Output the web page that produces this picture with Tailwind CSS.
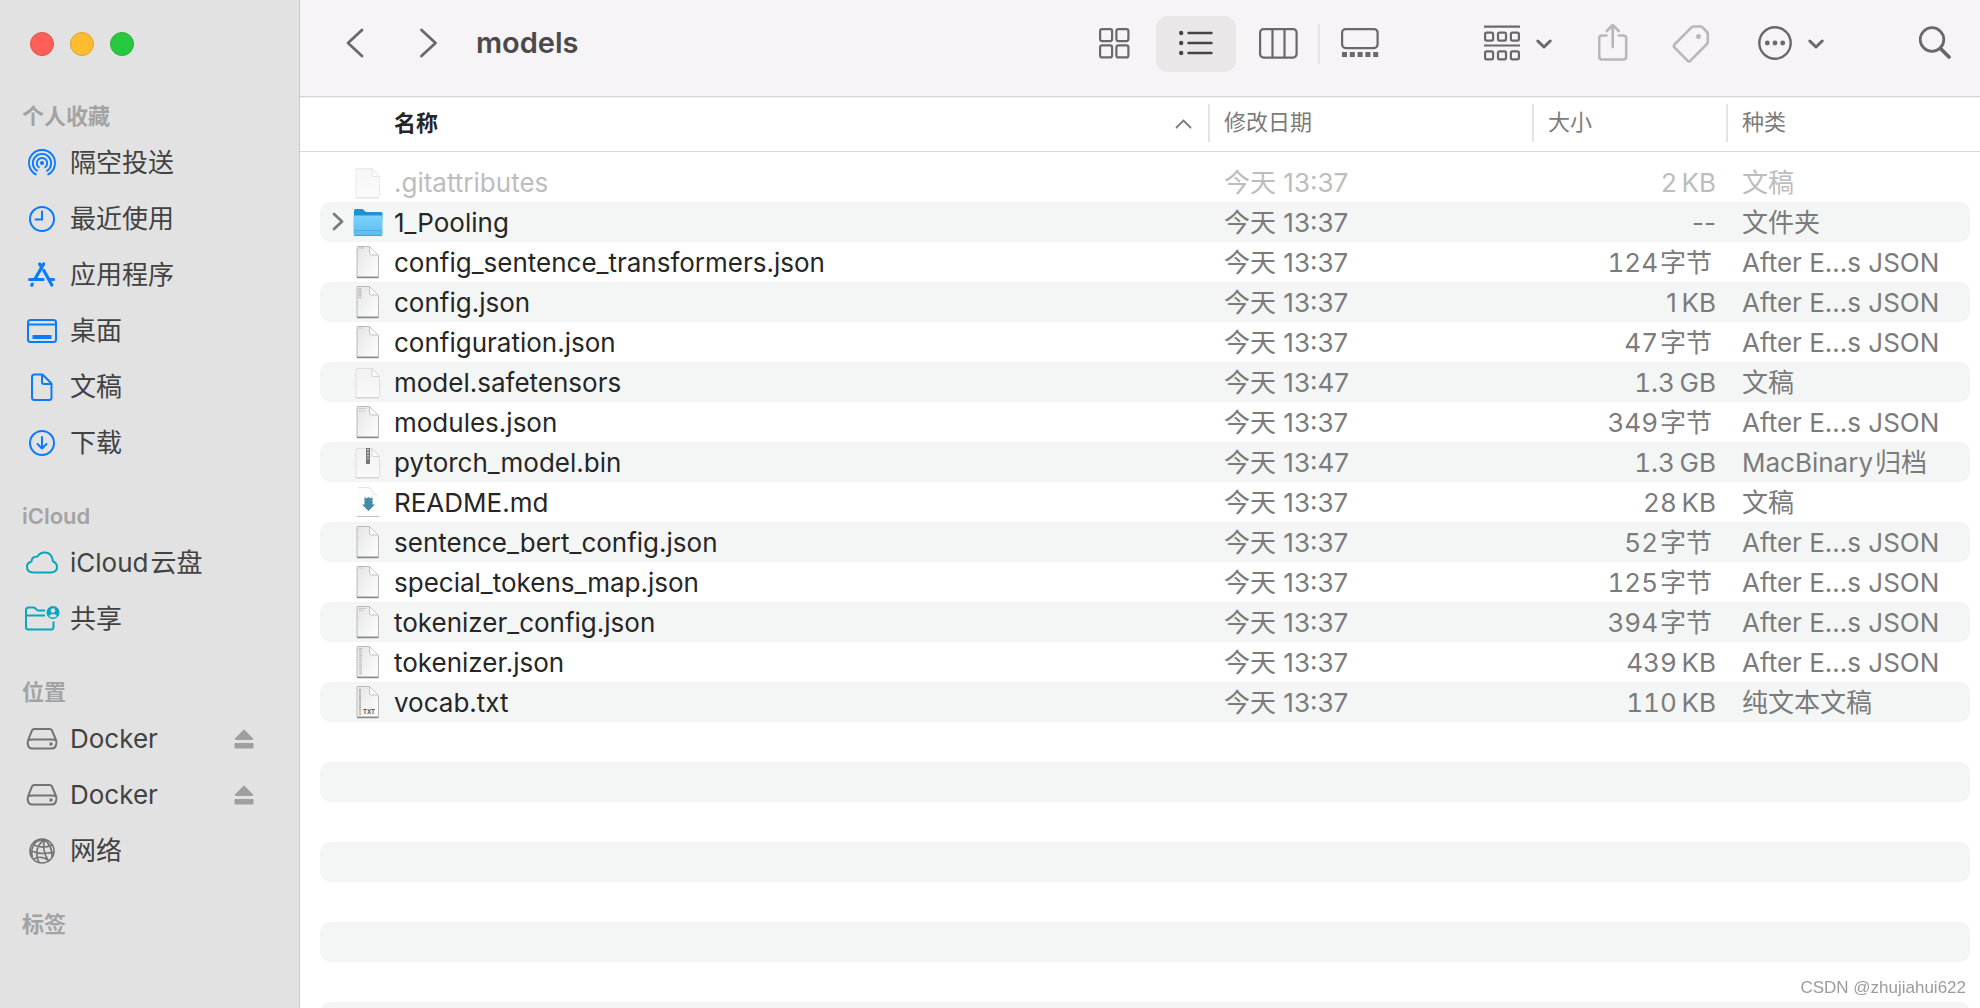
<!DOCTYPE html>
<html lang="zh-CN">
<head>
<meta charset="utf-8">
<meta name="viewport" content="width=device-width, initial-scale=1">
<title>models</title>
<script src="https://cdn.jsdelivr.net/npm/@tailwindcss/browser@4"></script>
</head>
<body class="flex h-screen overflow-hidden bg-white font-['Inter','Noto_Sans_CJK_SC',sans-serif] text-[#262626]">

<!-- Shared icons -->
<svg class="absolute size-0" aria-hidden="true">
  <defs>
    <linearGradient id="paper" x1="0" y1="0" x2="1" y2="1"><stop offset="0" stop-color="#e4e4e4"/><stop offset="1" stop-color="#fff"/></linearGradient>
    <linearGradient id="plain" x1="0" y1="0" x2="0" y2="1"><stop offset="0" stop-color="#f1f1f1"/><stop offset="1" stop-color="#fafafa"/></linearGradient>
    <linearGradient id="folderFront" x1="0" y1="0" x2="0" y2="1"><stop offset="0" stop-color="#7dd3fb"/><stop offset="1" stop-color="#5cbdf0"/></linearGradient>
    <symbol id="i-blank" viewBox="0 0 32 40">
      <path d="M4.500 6.500h15.500l7.500 8.500v18.500q0 2 -2 2h-20q-1.500 0 -1.500 -1.500v-26q0 -1.500 .5 -1.500z" fill="url(#plain)" stroke="#dedede"/>
      <path d="M20 6.500l7.500 8h-6q-1.500 0 -1.500 -1.500z" fill="#fff" stroke="#d4d4d4"/>
      <path d="M4 36h23" stroke="#cfcfcf"/>
    </symbol>
    <symbol id="i-json" viewBox="0 0 32 40">
      <path d="M5.500 4.500h12l9 9v21.500h-21.500v-29.500z" fill="url(#paper)" stroke="#b9b9b9"/>
      <path d="M17.500 4.500v6.500q0 2 2 2h6.500z" fill="#fff" stroke="#c4c4c4"/>
      <path d="M5 35.500h21.500" stroke="#8a8a8a" stroke-width="1.500"/>
    </symbol>
    <symbol id="i-drive" viewBox="0 0 32 24">
      <g fill="none" stroke="currentColor" stroke-width="2"><path d="M8.500 2h15q1.800 0 2.500 1.500l4 9.500q1 2.500 0 5q-.8 3.500-4 3.500h-20q-3.200 0-4-3.500q-.8-2.500 .2-5l3.800-9.500q.7-1.500 2.500-1.500zM2 13.500q1.500-1 4-1h20q2.500 0 4 1"/></g>
      <circle cx="25" cy="17" r="1.800" fill="currentColor"/>
    </symbol>
    <symbol id="i-eject" viewBox="0 0 20 20"><path d="M9 1.200q1-.9 2 0l8 8.300q1 1.500-.8 1.500h-16.400q-1.800 0-.8-1.500z" fill="currentColor"/><rect x=".5" y="14" width="19" height="5.500" rx="1.200" fill="currentColor"/></symbol>
    <symbol id="i-down" viewBox="0 0 16 10"><path d="M1.800 2l6.200 6 6.200-6" fill="none" stroke="currentColor" stroke-width="3" stroke-linecap="round" stroke-linejoin="round"/></symbol>
  </defs>
</svg>

<aside class="flex w-[300px] shrink-0 flex-col overflow-hidden border-r border-[#c9c9c9] bg-[#e2e2e2] text-[#424242]">
  <div class="flex h-[71px] shrink-0 gap-4 pt-8 pl-[30px]">
    <button aria-label="关闭" class="size-6 rounded-full border border-[#e2504a] bg-[#ff5f57]"></button>
    <button aria-label="最小化" class="size-6 rounded-full border border-[#e0a32c] bg-[#febc2e]"></button>
    <button aria-label="缩放" class="size-6 rounded-full border border-[#24b038] bg-[#28c840]"></button>
  </div>
  <nav class="text-[26px] leading-14 [&_a]:flex [&_a]:h-14 [&_a]:items-center [&_a]:gap-[11px] [&_a]:pr-[45px] [&_a]:pl-[25px] [&_a>svg:first-child]:shrink-0 [&_h2]:h-16 [&_h2]:pt-[26px] [&_h2]:pl-[22px] [&_h2]:text-[22px] [&_h2]:leading-[38px] [&_h2]:font-semibold [&_h2]:text-[#a3a3a3]">
    <h2>个人收藏</h2>
    <ul>
      <li><a href="#"><svg class="h-8 w-[34px] text-[#0a7aff]" viewBox="0 0 34 32" fill="none" stroke="currentColor" stroke-width="1.900" stroke-linecap="round"><circle cx="17" cy="16" r="2" fill="currentColor" stroke="none"/><path d="M13.800 20.300a5.200 5.200 0 1 1 6.400 0M12 23.800a9.200 9.200 0 1 1 10 0M10.800 27.400a13 13 0 1 1 12.400 0"/></svg>隔空投送</a></li>
      <li><a href="#"><svg class="h-8 w-[34px] text-[#0a7aff]" viewBox="0 0 34 32" fill="none" stroke="currentColor" stroke-width="2" stroke-linecap="round"><circle cx="17" cy="16" r="12"/><path d="M17 8.500v8h-6.500"/></svg>最近使用</a></li>
      <li><a href="#"><svg class="h-8 w-[34px] text-[#0a7aff]" viewBox="0 0 34 32" fill="none" stroke="currentColor" stroke-width="3.200" stroke-linecap="round"><path d="M18.600 5l-8.300 14.500M14.600 5l2 3M4.600 20.500h13.400M24.500 20.500h4M18.800 11.500l8 14.500M7.300 25.200l-.6 1"/></svg>应用程序</a></li>
      <li><a href="#"><svg class="h-8 w-[34px] text-[#0a7aff]" viewBox="0 0 34 32" fill="none" stroke="currentColor" stroke-width="2"><rect x="3" y="5" width="28" height="22" rx="2.500"/><path d="M3 9.500h28"/><rect x="7.500" y="20" width="19" height="4" rx=".5" fill="currentColor" stroke="none"/></svg>桌面</a></li>
      <li><a href="#"><svg class="h-8 w-[34px] text-[#0a7aff]" viewBox="0 0 34 32" fill="none" stroke="currentColor" stroke-width="2" stroke-linejoin="round"><path d="M9.500 3.500h8l9 9v14q0 2.500-2.500 2.500h-14.500q-2.500 0-2.500-2.500v-20.500q0-2.500 2.500-2.500zM17 3.500v7.500q0 2 2 2h7.500"/></svg>文稿</a></li>
      <li><a href="#"><svg class="h-8 w-[34px] text-[#0a7aff]" viewBox="0 0 34 32" fill="none" stroke="currentColor" stroke-width="2" stroke-linecap="round" stroke-linejoin="round"><circle cx="17" cy="16" r="12"/><path d="M17 10v11M12.500 17l4.500 4.500 4.500-4.500"/></svg>下载</a></li>
    </ul>
    <h2>iCloud</h2>
    <ul>
      <li><a href="#"><svg class="h-8 w-[34px] text-[#08a5bd]" viewBox="0 0 34 32" fill="none" stroke="currentColor" stroke-width="2" stroke-linejoin="round"><path d="M8.500 25.500q-6.500 0-6.500-5.700q0-4 4.500-5.300q0-5 6-5q2.500-4 7-4q7.500 0 8.500 9q4 1.500 4 5.500q0 5-5.500 5.500z"/></svg><span>iCloud<span class="pl-0.5">云盘</span></span></a></li>
      <li><a href="#"><svg class="h-8 w-[34px] overflow-visible text-[#08a5bd]" viewBox="0 0 34 32" fill="none" stroke="currentColor" stroke-width="2"><path d="M20 7.500h-6.500q-1.500 0-2.500-1.500t-2.500-1.500h-5q-2.500 0-2.500 2.500v17q0 2.500 2.500 2.500h22.500q2.500 0 2.500-2.500v-5.500M1 12.500h19"/><circle cx="28" cy="9.500" r="6.500" fill="currentColor" stroke="none"/><circle cx="28" cy="7.500" r="2.200" fill="#e2e2e2" stroke="none"/><path d="M23.800 13q4.200-4 8.400 0q-4.200 3-8.400 0z" fill="#e2e2e2" stroke="none"/></svg>共享</a></li>
    </ul>
    <h2>位置</h2>
    <ul>
      <li><a href="#"><svg class="h-6 w-[34px] text-[#737373]"><use href="#i-drive"/></svg>Docker<svg class="ml-auto size-5 text-[#9f9f9f]"><use href="#i-eject"/></svg></a></li>
      <li><a href="#"><svg class="h-6 w-[34px] text-[#737373]"><use href="#i-drive"/></svg>Docker<svg class="ml-auto size-5 text-[#9f9f9f]"><use href="#i-eject"/></svg></a></li>
      <li><a href="#"><svg class="h-8 w-[34px] text-[#737373]" viewBox="0 0 34 32" fill="none" stroke="currentColor" stroke-width="1.600"><circle cx="17" cy="16" r="12"/><path d="M19.500 4.500q-12 9-5.500 23M19.500 4.500q-3 11 4 21.500M19.500 4.500q8 6 7.500 18M19.500 4.500q-9 1-11 5.500q-3 6-1 12M8 9.500q9 5 19 .5M5.500 15.500q10 5 23 1.500M9 24q6-4 15 1.500"/></svg>网络</a></li>
    </ul>
    <h2>标签</h2>
  </nav>
</aside>

<main class="flex min-w-0 flex-1 flex-col">
  <header class="flex h-[97px] shrink-0 items-start border-b border-[#d6d5d6] bg-[#f6f4f6] pt-4 pr-7 pl-[46px] text-[#6b6869] [&_button]:flex [&_button]:h-14 [&_button]:shrink-0 [&_button]:items-center [&_button]:justify-center">
    <button aria-label="后退" class="w-5"><svg class="h-8 w-5" viewBox="0 0 20 32" fill="none" stroke="currentColor" stroke-width="2.800" stroke-linecap="round" stroke-linejoin="round"><path d="M16 2l-14 13 14 13"/></svg></button>
    <button aria-label="前进" class="ml-13 w-5"><svg class="h-8 w-5" viewBox="0 0 20 32" fill="none" stroke="currentColor" stroke-width="2.800" stroke-linecap="round" stroke-linejoin="round"><path d="M3.500 2l14 13-14 13"/></svg></button>
    <h1 class="min-w-0 flex-1 truncate pl-[38px] text-[29px] leading-[54px] font-semibold text-[#4b494a]">models</h1>

    <div class="flex shrink-0 items-center" role="group" aria-label="显示方式">
      <button aria-label="图标" class="w-20"><svg class="h-8 w-10" viewBox="0 0 40 32" fill="none" stroke="currentColor" stroke-width="2.200"><rect x="6.100" y="1.100" width="12" height="12" rx="2"/><rect x="22.400" y="1.100" width="12" height="12" rx="2"/><rect x="6.100" y="17.400" width="12" height="12" rx="2"/><rect x="22.400" y="17.400" width="12" height="12" rx="2"/></svg></button>
      <span class="w-0.5"></span>
      <button aria-label="列表" aria-pressed="true" class="w-20 rounded-xl bg-[#e9e7e8] text-[#464344]"><svg class="h-8 w-10" viewBox="0 0 40 32" fill="none" stroke="currentColor" stroke-width="2.400" stroke-linecap="round"><path d="M12.500 5h23M12.500 15h23M12.500 25h23"/><g fill="currentColor" stroke="none"><circle cx="5.200" cy="5" r="2.200"/><circle cx="5.200" cy="15" r="2.200"/><circle cx="5.200" cy="25" r="2.200"/></g></svg></button>
      <span class="w-0.5"></span>
      <button aria-label="分栏" class="w-20"><svg class="h-8 w-10" viewBox="0 0 40 32" fill="none" stroke="currentColor" stroke-width="2.200"><rect x="2.100" y="1.100" width="36.500" height="28.500" rx="3.500"/><path d="M14.500 1v29M26.500 1v29"/></svg></button>
      <span class="h-10 w-0.5 bg-[#e6e4e6]"></span>
      <button aria-label="画廊" class="w-20"><svg class="h-8 w-10" viewBox="0 0 40 32" fill="none" stroke="currentColor" stroke-width="2.200"><rect x="2.100" y="1.100" width="35.500" height="19" rx="3.500"/><path d="M2 24h5v5h-5zM9.800 24h5v5h-5zM17.600 24h5v5h-5zM25.400 24h5v5h-5zM33.200 24h5v5h-5z" fill="currentColor" stroke="none"/></svg></button>
    </div>

    <button aria-label="分组" class="ml-[84px] w-[68px] gap-4"><svg class="h-10 w-9" viewBox="0 0 36 40" fill="none" stroke="currentColor" stroke-width="2.200"><path d="M0 2.700h36M0 21.500h36"/><rect x="1.100" y="8.600" width="8" height="8" rx="1.500"/><rect x="14" y="8.600" width="8" height="8" rx="1.500"/><rect x="26.900" y="8.600" width="8" height="8" rx="1.500"/><rect x="1.100" y="27.300" width="8" height="8" rx="1.500"/><rect x="14" y="27.300" width="8" height="8" rx="1.500"/><rect x="26.900" y="27.300" width="8" height="8" rx="1.500"/></svg><svg class="h-2.5 w-4"><use href="#i-down"/></svg></button>
    <button aria-label="共享" class="ml-[46px] w-[30px] text-[#b9b7b9]"><svg class="h-10 w-[30px]" viewBox="0 0 30 40" fill="none" stroke="currentColor" stroke-width="2.600" stroke-linecap="round" stroke-linejoin="round"><path d="M8.500 11.500h-4.300q-3 0-3 3v18q0 3 3 3h21q3 0 3-3v-18q0-3-3-3h-4.300M14.700 23v-21.500M8.700 7l6-6 6 6"/></svg></button>
    <button aria-label="标签" class="ml-11 w-[38px] text-[#b9b7b9]"><svg class="h-10 w-[38px]" viewBox="0 0 38 40" fill="none" stroke="currentColor" stroke-width="2.600" stroke-linejoin="round"><path d="M21.500 2.500h7q1.200 0 2 .8l4.500 4.700q.8.800.8 2v8q0 1.200-.8 2l-16.500 16.700q-1.500 1.300-3 0l-13-13.200q-1.300-1.500 0-3l17-17.200q.8-.8 2-.8z"/><circle cx="26.500" cy="12.500" r="2.500" fill="currentColor" stroke="none"/></svg></button>
    <button aria-label="操作" class="ml-12 w-[66px] gap-4"><svg class="h-10 w-[34px]" viewBox="0 0 34 40" fill="none" stroke="currentColor" stroke-width="2.400"><circle cx="17" cy="19" r="15.700"/><g fill="currentColor" stroke="none"><circle cx="9.300" cy="19" r="2.400"/><circle cx="17" cy="19" r="2.400"/><circle cx="24.700" cy="19" r="2.400"/></g></svg><svg class="h-2.5 w-4"><use href="#i-down"/></svg></button>
    <button aria-label="搜索" class="ml-[95px] w-[33px]"><svg class="h-10 w-[33px]" viewBox="0 0 33 40" fill="none" stroke="currentColor" stroke-width="2.800" stroke-linecap="round"><circle cx="13" cy="15.500" r="11.800"/><path d="M21.500 24.500l8.500 8.500" stroke-width="3.800"/></svg></button>
  </header>

  <table class="w-full table-fixed border-separate border-spacing-0 text-left text-[26px] leading-[42px] whitespace-nowrap text-[#7b7b7b]
    [&_tbody_div]:h-10 [&_tbody_td]:p-0 [&_tbody_td:first-child]:pl-5 [&_tbody_td:last-child]:pr-2.5
    [&_tbody_td:first-child>div]:flex [&_tbody_td:first-child>div]:items-start [&_tbody_td:first-child>div]:gap-2.5 [&_tbody_td:first-child>div]:rounded-l-[10px] [&_tbody_td:first-child>div]:pl-8 [&_tbody_td:first-child>div]:text-[#262626]
    [&_tbody_td:nth-child(2)>div]:pl-4 [&_tbody_td:nth-child(3)>div]:pr-2.5 [&_tbody_td:nth-child(3)>div]:text-right
    [&_tbody_td:last-child>div]:rounded-r-[10px] [&_tbody_td:last-child>div]:pl-4
    [&_tbody_tr:nth-child(even)_div]:bg-[#f4f6f5]
    [&_tbody_svg]:h-10 [&_tbody_svg]:w-8 [&_tbody_svg]:shrink-0">
    <colgroup><col><col class="w-[324px]"><col class="w-[194px]"><col class="w-[254px]"></colgroup>
    <thead class="text-[22px] [&_th]:h-[55px] [&_th]:border-t [&_th]:border-b [&_th]:border-t-[#f0f0f0] [&_th]:border-b-[#dadada] [&_th]:p-0 [&_th]:pb-1 [&_th]:font-normal [&_th>div]:h-[38px] [&_th>div]:leading-9">
      <tr>
        <th scope="col" aria-sort="ascending"><div class="flex items-center justify-between pr-4 pl-[94px] font-semibold text-[#262626]">名称<svg class="h-4 w-[17px] text-[#7b7b7b]" viewBox="0 0 17 16" fill="none" stroke="currentColor" stroke-width="1.800" stroke-linecap="round"><path d="M1.500 12.500l7-7 7 7"/></svg></div></th>
        <th scope="col"><div class="border-l-2 border-[#e3e3e3] pl-3.5">修改日期</div></th>
        <th scope="col"><div class="border-l-2 border-[#e3e3e3] pl-3.5">大小</div></th>
        <th scope="col"><div class="border-l-2 border-[#e3e3e3] pl-3.5">种类</div></th>
      </tr>
    </thead>
    <tbody class="before:block before:h-2.5">
      <tr class="text-[#bdbdbd]"><td><div class="text-[#bdbdbd]!"><svg class="opacity-60"><use href="#i-blank"/></svg>.gitattributes</div></td><td><div>今天 13:37</div></td><td><div>2&#8201;KB</div></td><td><div>文稿</div></td></tr>
      <tr><td><div class="relative"><button aria-label="展开 1_Pooling" class="absolute top-2.5 left-3 h-5 w-3"><svg class="h-5! w-3!" viewBox="0 0 12 20" fill="none" stroke="#7b7b7b" stroke-width="2.800" stroke-linecap="round" stroke-linejoin="round"><path d="M2 2l8 7.500-8 7.500"/></svg></button><svg viewBox="0 0 32 40"><path d="M2 8.500q0-1.500 1.500-1.500h7l3.500 3h15q1.500 0 1.500 1.500v6h-28.500z" fill="#2391cf"/><path d="M1.500 13.500h29v18q0 1.500-1.500 1.500h-26q-1.500 0-1.500-1.500z" fill="url(#folderFront)"/><path d="M2 28.500h28" stroke="#4cafe4"/><path d="M2 33.500h28" stroke="#5a9cc0"/></svg>1_Pooling</div></td><td><div>今天 13:37</div></td><td><div>--</div></td><td><div>文件夹</div></td></tr>
      <tr><td><div><svg viewBox="0 0 32 40"><use href="#i-json"/><path d="M7 6h5" stroke="#bbb"/></svg>config_sentence_transformers.json</div></td><td><div>今天 13:37</div></td><td><div><span class="tabular-nums">124</span><span class="pr-1 pl-0.5">字节</span></div></td><td><div>After E...s JSON</div></td></tr>
      <tr><td><div><svg viewBox="0 0 32 40"><use href="#i-json"/><path d="M8 6v11" stroke="#bbb" stroke-width="3" stroke-dasharray="1.500 .7"/></svg>config.json</div></td><td><div>今天 13:37</div></td><td><div>1&#8201;KB</div></td><td><div>After E...s JSON</div></td></tr>
      <tr><td><div><svg viewBox="0 0 32 40"><use href="#i-json"/><path d="M7 6h4" stroke="#c8c8c8"/></svg>configuration.json</div></td><td><div>今天 13:37</div></td><td><div><span class="tabular-nums">47</span><span class="pr-1 pl-0.5">字节</span></div></td><td><div>After E...s JSON</div></td></tr>
      <tr><td><div><svg><use href="#i-blank"/></svg>model.safetensors</div></td><td><div>今天 13:47</div></td><td><div><span class="tabular-nums">1.3</span>&#8201;GB</div></td><td><div>文稿</div></td></tr>
      <tr><td><div><svg viewBox="0 0 32 40"><use href="#i-json"/><path d="M7 6.500h7M7 9h6" stroke="#c4c4c4" stroke-dasharray="2 .6"/></svg>modules.json</div></td><td><div>今天 13:37</div></td><td><div><span class="tabular-nums">349</span><span class="pr-1 pl-0.5">字节</span></div></td><td><div>After E...s JSON</div></td></tr>
      <tr><td><div><svg viewBox="0 0 32 40"><use href="#i-blank"/><rect x="14" y="6" width="4" height="16" fill="#777"/><path d="M16 7v10" stroke="#e3e3e3" stroke-width="1.500" stroke-dasharray="1.500 1.500"/></svg>pytorch_model.bin</div></td><td><div>今天 13:47</div></td><td><div><span class="tabular-nums">1.3</span>&#8201;GB</div></td><td><div>MacBinary<span class="pl-0.5">归档</span></div></td></tr>
      <tr><td><div><svg viewBox="0 0 32 40"><path d="M5 5h13l8 8v21h-21z" fill="#fdfdfd"/><path d="M6 5.500h10q3 0 4 3.500q.5 3 5 4.500" fill="none" stroke="#e4e4e4"/><path d="M5 34.500h22" stroke="#c0c0c0"/><path d="M12.500 15l2 1.500 2-1.500 2 1.500 2-1.500v7.500h2.500l-6.500 6.500-6.500-6.500h2.500z" fill="#4489a6"/></svg>README.md</div></td><td><div>今天 13:37</div></td><td><div><span class="tabular-nums">28</span>&#8201;KB</div></td><td><div>文稿</div></td></tr>
      <tr><td><div><svg><use href="#i-json"/></svg>sentence_bert_config.json</div></td><td><div>今天 13:37</div></td><td><div><span class="tabular-nums">52</span><span class="pr-1 pl-0.5">字节</span></div></td><td><div>After E...s JSON</div></td></tr>
      <tr><td><div><svg viewBox="0 0 32 40"><use href="#i-json"/><path d="M7 6h4" stroke="#c8c8c8"/></svg>special_tokens_map.json</div></td><td><div>今天 13:37</div></td><td><div><span class="tabular-nums">125</span><span class="pr-1 pl-0.5">字节</span></div></td><td><div>After E...s JSON</div></td></tr>
      <tr><td><div><svg viewBox="0 0 32 40"><use href="#i-json"/><path d="M7 6.500h7M7 8.500h4" stroke="#bbb" stroke-dasharray="2 .6"/></svg>tokenizer_config.json</div></td><td><div>今天 13:37</div></td><td><div><span class="tabular-nums">394</span><span class="pr-1 pl-0.5">字节</span></div></td><td><div>After E...s JSON</div></td></tr>
      <tr><td><div><svg viewBox="0 0 32 40"><use href="#i-json"/><path d="M8.500 6v27" stroke="#bbb" stroke-width="3" stroke-dasharray="1 .8"/></svg>tokenizer.json</div></td><td><div>今天 13:37</div></td><td><div><span class="tabular-nums">439</span>&#8201;KB</div></td><td><div>After E...s JSON</div></td></tr>
      <tr><td><div><svg viewBox="0 0 32 40"><use href="#i-json"/><path d="M8 7v26" stroke="#999" stroke-width="2" stroke-dasharray="1 .8"/><text x="11" y="32" font-size="6" font-weight="600" fill="#444">TXT</text></svg>vocab.txt</div></td><td><div>今天 13:37</div></td><td><div><span class="tabular-nums">110</span>&#8201;KB</div></td><td><div>纯文本文稿</div></td></tr>
    </tbody>
  </table>

  <!-- Striping that continues below the last file -->
  <div aria-hidden="true" class="flex min-h-0 flex-1 flex-col gap-10 overflow-hidden pt-10 pr-2.5 pl-5 [&>div]:h-10 [&>div]:shrink-0 [&>div]:rounded-[10px] [&>div]:bg-[#f4f6f5]">
    <div></div><div></div><div></div><div></div><div></div><div></div><div></div><div></div><div></div><div></div>
  </div>
</main>

<p class="fixed right-3.5 bottom-2 font-['Liberation_Sans',Arial,sans-serif] text-[17px] leading-6 text-[#9b9b9b]">CSDN @zhujiahui622</p>
</body>
</html>
